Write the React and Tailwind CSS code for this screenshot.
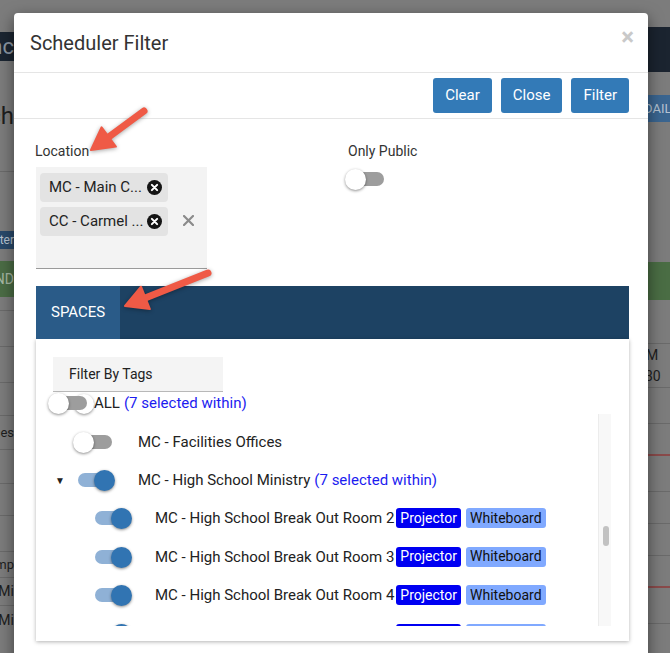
import React from 'react';

function Toggle({ on, ghost }) {
  return (
    <span className="relative inline-flex h-[20px] w-[32px] shrink-0 items-center">
      {ghost && (
        <span className="absolute left-[19px] top-[1px] h-[20px] w-[20px] rounded-full bg-white shadow-[0_1px_3px_rgba(0,0,0,0.45)]" />
      )}
      <span className={`relative h-[14px] w-[32px] rounded-full ${on ? 'bg-[#8fb1d6]' : 'bg-[#9d9d9d]'}`} />
      <span
        className={`absolute top-0 h-[21px] w-[21px] rounded-full shadow-[0_1px_3px_rgba(0,0,0,0.45)] ${
          on ? 'right-[-5px] bg-[#3174b2]' : 'left-[-7px] bg-white'
        }`}
      />
    </span>
  );
}

function CircleX() {
  return (
    <svg width="15" height="15" viewBox="0 0 16 16" className="shrink-0">
      <circle cx="8" cy="8" r="8" fill="#141414" />
      <path d="M5.2 5.2 L10.8 10.8 M10.8 5.2 L5.2 10.8" stroke="#fff" strokeWidth="2.2" strokeLinecap="round" />
    </svg>
  );
}

function Chip({ label }) {
  return (
    <div className="flex h-[29px] w-[128px] items-center justify-between rounded-[4px] bg-[#e3e3e3] pl-[9px] pr-[6px] text-[15px] text-[#222]">
      <span>{label}</span>
      <CircleX />
    </div>
  );
}

function Tags() {
  return (
    <>
      <span className="ml-[2px] flex h-[20px] items-center rounded-[3px] bg-[#0000f2] px-[4px] text-[14px] text-white">
        Projector
      </span>
      <span className="ml-[5px] flex h-[20px] items-center rounded-[3px] bg-[#80a9ff] px-[4px] text-[14px] text-[#111]">
        Whiteboard
      </span>
    </>
  );
}

function Arrow({ x1, y1, x2, y2 }) {
  const dx = x2 - x1;
  const dy = y2 - y1;
  const len = Math.hypot(dx, dy);
  const ux = dx / len;
  const uy = dy / len;
  const bx = x2 - ux * 22;
  const by = y2 - uy * 22;
  const nx = -uy;
  const ny = ux;
  const pts = `${x2},${y2} ${bx + nx * 12},${by + ny * 12} ${bx - nx * 12},${by - ny * 12}`;
  return (
    <g>
      <line x1={x1} y1={y1} x2={bx + ux * 3} y2={by + uy * 3} stroke="#ef5a46" strokeWidth="7" strokeLinecap="round" />
      <polygon points={pts} fill="#ef5a46" stroke="#ef5a46" strokeWidth="2" strokeLinejoin="round" />
    </g>
  );
}

const ROOMS = [2, 3, 4, 5];

export default function App() {
  return (
    <div className="relative flex h-[653px] w-[670px] overflow-hidden bg-[#7c7c7c] font-['Roboto',sans-serif]">
      {/* page behind the dialog */}
      <div className="flex w-[14px] flex-col overflow-hidden text-nowrap">
        <div className="h-[32px]" />
        <div className="flex h-[29px] items-center justify-end bg-[#1b2531] text-[22px] text-[#8d97a3]">nc</div>
        <div className="h-[40px]" />
        <div className="flex h-[30px] items-center justify-end text-[24px] text-[#1e1e1e]">ch</div>
        <div className="h-[41px] border-b border-[#6a6a6a]" />
        <div className="h-[59px]" />
        <div className="flex h-[18px] items-center justify-end bg-[#29496a] text-[12px] text-[#b8c4d0]">ter</div>
        <div className="h-[12px]" />
        <div className="flex h-[36px] items-center justify-end bg-[#4b6c45] text-[14px] text-[#a8b8a4]">ND</div>
        <div className="h-[14px] border-b border-[#6a6a6a]" />
        <div className="h-[36px] border-b border-[#6a6a6a]" />
        <div className="h-[36px] border-b border-[#6a6a6a]" />
        <div className="h-[33px] border-b border-[#6a6a6a]" />
        <div className="flex h-[34px] items-center justify-end border-b border-[#6a6a6a] text-[13px] text-[#1e1e1e]">ces</div>
        <div className="h-[34px] border-b border-[#6a6a6a]" />
        <div className="h-[32px] border-b border-[#6a6a6a]" />
        <div className="h-[36px] border-b border-[#6a6a6a]" />
        <div className="flex h-[26px] items-center justify-end border-b border-[#6a6a6a] text-[13px] text-[#1e1e1e]">mp</div>
        <div className="flex h-[28px] items-center justify-end border-b border-[#6a6a6a] text-[14px] text-[#1e1e1e]">Mi</div>
        <div className="flex h-[28px] items-center justify-end text-[14px] text-[#1e1e1e]">Mi</div>
      </div>
      <div className="flex-1" />
      <div className="flex w-[22px] flex-col overflow-hidden text-nowrap">
        <div className="h-[27px]" />
        <div className="h-[45px] bg-[#1b2430]" />
        <div className="h-[23px]" />
        <div className="flex h-[27px] items-center bg-[#3a6590] text-[13px] text-[#b5c3d2]">
          <span className="-ml-[4px]">DAIL</span>
        </div>
        <div className="h-[140px]" />
        <div className="h-[38px] bg-[#4a6d44]" />
        <div className="h-[44px] border-b border-[#6a6a6a]" />
        <div className="flex h-[22px] items-center text-[14px] text-[#1e1e1e]">
          <span className="-ml-[2px]">M</span>
        </div>
        <div className="flex h-[22px] items-center border-b border-[#6a6a6a] text-[14px] text-[#1e1e1e]">
          <span className="-ml-[3px]">30</span>
        </div>
        <div className="h-[36px] border-b border-[#6a6a6a]" />
        <div className="h-[32px] border-b-2 border-[#8a4a4a]" />
        <div className="h-[36px] border-b border-[#6a6a6a]" />
        <div className="h-[32px] border-b border-[#6a6a6a]" />
        <div className="h-[32px] border-b border-[#6a6a6a]" />
        <div className="h-[32px] border-b-2 border-[#8a4a4a]" />
        <div className="h-[36px] border-b border-[#6a6a6a]" />
      </div>

      {/* dialog */}
      <div className="absolute left-[14px] top-[13px] h-[700px] w-[634px] rounded-[4px] bg-white shadow-[0_5px_15px_rgba(0,0,0,0.5)]">
        <div className="flex h-[60px] items-center justify-between border-b border-[#e5e5e5] pl-[16px] pr-[14px]">
          <h4 className="text-[20px] text-[#333]">Scheduler Filter</h4>
          <span className="-mt-[12px] text-[24px] font-bold leading-none text-[#c9c9c9]">×</span>
        </div>
        <div className="flex justify-end gap-[9px] border-b border-[#e5e5e5] px-[19px] py-[5px]">
          <button className="h-[35px] rounded-[3px] bg-[#337ab7] px-[12px] text-[15px] text-white">Clear</button>
          <button className="h-[35px] rounded-[3px] bg-[#337ab7] px-[12px] text-[15px] text-white">Close</button>
          <button className="h-[35px] rounded-[3px] bg-[#337ab7] px-[12px] text-[15px] text-white">Filter</button>
        </div>

        <div className="pl-[22px] pr-[19px] pt-[22px]">
          <div className="flex">
            <div className="w-[308px]">
              <div className="-ml-[1px] h-[20px] text-[14px] leading-[20px] text-[#333]">Location</div>
              <div className="mt-[6px] flex h-[102px] w-[171px] items-start border-b border-[#9a9a9a] bg-[#f3f3f3] pl-[4px] pt-[6px]">
                <div className="flex flex-col gap-[5px]">
                  <Chip label="MC - Main C..." />
                  <Chip label="CC - Carmel ..." />
                </div>
                <svg width="11" height="11" viewBox="0 0 11 11" className="ml-[15px] mt-[42px]">
                  <path d="M1 1 L10 10 M10 1 L1 10" stroke="#8b8b8b" strokeWidth="2.2" strokeLinecap="round" />
                </svg>
              </div>
            </div>
            <div className="flex-1">
              <div className="h-[20px] pl-[4px] text-[14px] leading-[20px] text-[#333]">Only Public</div>
              <div className="mt-[8px] pl-[8px]">
                <Toggle on={false} />
              </div>
            </div>
          </div>

          <div className="mt-[17px] flex h-[53px] bg-[#1d4263]">
            <div className="flex items-center bg-[#2a5b88] px-[15px] text-[15px] text-white">SPACES</div>
          </div>

          <div className="h-[302px] bg-white pl-[17px] pr-[18px] pt-[18px] shadow-[0_1px_4px_rgba(0,0,0,0.3)]">
            <div className="flex h-[35px] w-[170px] items-center border-b border-[#b8b8b8] bg-[#f4f4f4] pl-[16px] text-[14px] text-[#222]">
              Filter By Tags
            </div>
            <div className="flex h-[22px] items-center pl-[2px] text-[15px] text-[#222]">
              <Toggle on={false} ghost />
              <span className="ml-[7px]">ALL</span>
              <span className="ml-[4px] text-[#1c1cf0]">(7 selected within)</span>
            </div>
            <div className="flex h-[212px]">
              <div className="flex-1 overflow-hidden pt-[9px] text-[15px] text-[#222]">
                <div className="flex h-[38px] items-center pl-[27px]">
                  <Toggle on={false} />
                  <span className="ml-[26px]">MC - Facilities Offices</span>
                </div>
                <div className="flex h-[38px] items-center">
                  <span className="w-[25px] pl-[2px] text-[10px] text-[#222]">▼</span>
                  <Toggle on />
                  <span className="ml-[28px]">MC - High School Ministry</span>
                  <span className="ml-[4px] text-[#1c1cf0]">(7 selected within)</span>
                </div>
                {ROOMS.map((n) => (
                  <div key={n} className="flex h-[38.5px] items-center pl-[42px]">
                    <Toggle on />
                    <span className="ml-[28px]">MC - High School Break Out Room {n}</span>
                    <Tags />
                  </div>
                ))}
              </div>
              <div className="relative w-[13px] border-l border-[#ececec] bg-[#f8f8f8]">
                <div className="absolute left-[4px] top-[112px] h-[20px] w-[6px] rounded-full bg-[#c2c2c2]" />
              </div>
            </div>
          </div>
        </div>
      </div>

      {/* annotation arrows */}
      <svg
        width="670"
        height="653"
        className="pointer-events-none absolute left-0 top-0 drop-shadow-[0_1px_2px_rgba(0,0,0,0.35)]"
      >
        <Arrow x1={144} y1={111} x2={91} y2={150} />
        <Arrow x1={208} y1={273} x2={125} y2={306} />
      </svg>
    </div>
  );
}
